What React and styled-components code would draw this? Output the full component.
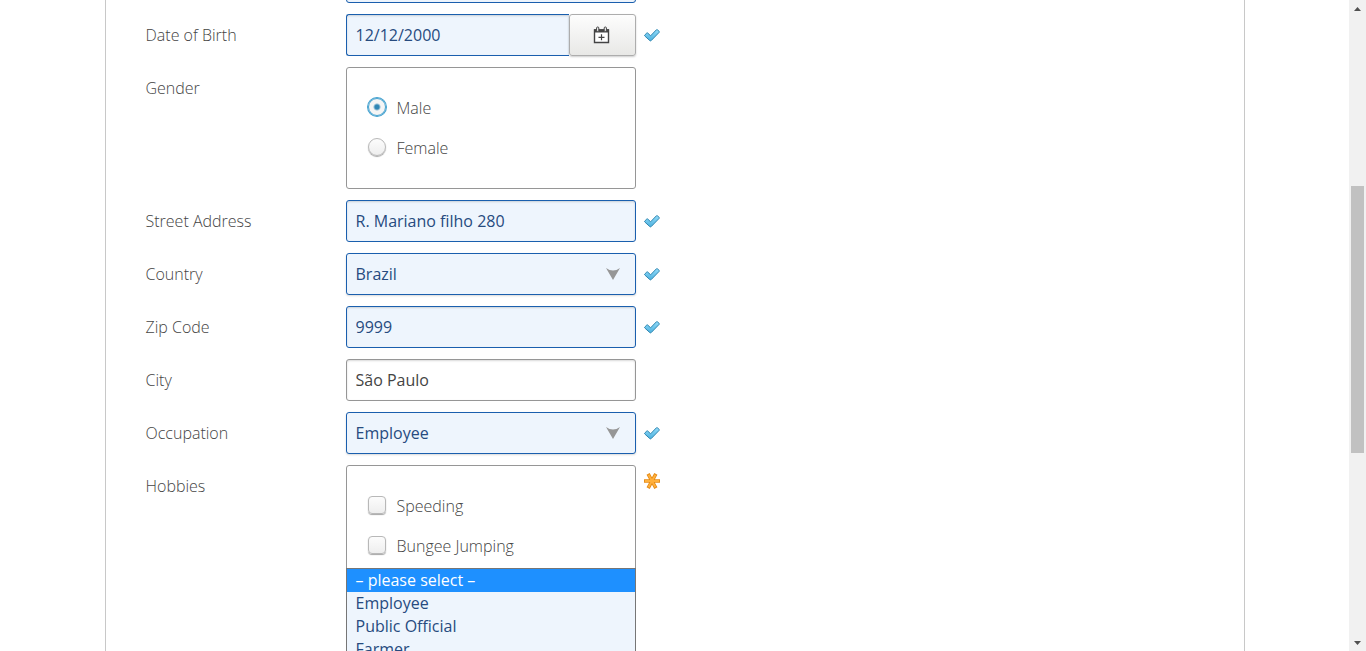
import React from "react";
import styled, { createGlobalStyle, css } from "styled-components";

const GlobalStyle = createGlobalStyle`
  *, *::before, *::after { box-sizing: border-box; }
  body {
    margin: 0;
    background: #fff;
    color: #444;
    font-family: "Open Sans", "Noto Sans", sans-serif;
    font-size: 16px;
    font-weight: 300;
    line-height: 22px;
  }
  input, select, button { font: inherit; margin: 0; }
`;

const Window = styled.div`
  display: flex;
  height: 100vh;
  overflow: hidden;
`;

const Viewport = styled.main`
  flex: 1;
  min-width: 0;
  overflow: hidden;
`;

const Panel = styled.div`
  display: flow-root;
  max-width: 1140px;
  min-height: 100vh;
  margin: 0 auto;
  padding: 0 40px;
  border: solid #c8c8c8;
  border-width: 0 1px;
`;

const Form = styled.form`
  display: flex;
  flex-direction: column;
  gap: 11px;
  margin-top: -39px;
`;

const Row = styled.div`
  display: grid;
  grid-template-columns: 200px minmax(0, 290px) 24px;
  align-items: start;

  > input { grid-column: 2; }
`;

const Caption = styled.label`
  padding-top: 10px;
`;

const Mark = styled.span`
  display: flex;
  padding: ${(p) => (p.$top ? "8px 0 0 8px" : "13px 0 0 8px")};
`;

const fieldLook = css`
  width: 100%;
  height: 42px;
  padding: 0 9px;
  border: 1px solid ${(p) => (p.$valid ? "#1a5fae" : "#969696")};
  border-radius: 3px;
  background: ${(p) => (p.$valid ? "#eef5fd" : "#fff")};
  color: ${(p) => (p.$valid ? "#274b7f" : "#444")};
  font-weight: 400;
  box-shadow: inset 0 1px 2px rgba(0, 0, 0, 0.15);
  outline: none;
`;

const TextField = styled.input`
  ${fieldLook}
`;

const SelectBox = styled.div`
  display: grid;
  align-items: center;

  > * { grid-area: 1 / 1; }
  > svg { justify-self: end; margin-right: 16px; pointer-events: none; }
`;

const SelectField = styled.select`
  ${fieldLook}
  appearance: none;
  box-shadow: 0 1px 2px rgba(0, 0, 0, 0.15);
`;

const DateGroup = styled.div`
  display: flex;

  input { flex: 1; min-width: 0; border-right: 0; border-radius: 3px 0 0 3px; }
`;

const DateButton = styled.button`
  display: flex;
  align-items: center;
  justify-content: center;
  width: 67px;
  height: 42px;
  padding: 0 2px 0 0;
  border: 1px solid #adadad;
  border-radius: 3px;
  background: linear-gradient(#fdfdfd, #e8e8e6);
  box-shadow: 0 1px 2px rgba(0, 0, 0, 0.2);
`;

const Group = styled.fieldset`
  position: relative;
  min-width: 0;
  margin: 0;
  padding: 20px;
  border: 1px solid #969696;
  border-radius: 3px;
`;

const Choice = styled.label`
  display: flex;
  align-items: center;
  gap: 10px;
  height: 40px;
`;

const choiceLook = css`
  appearance: none;
  flex: none;
  width: 18px;
  height: 18px;
  margin: 0 1px 2px;
  border: 1px solid #b8b8b8;
  background: linear-gradient(#fcfcfc, #eeeeee);
  box-shadow: 0 1px 1px rgba(0, 0, 0, 0.35);
`;

const Radio = styled.input.attrs({ type: "radio" })`
  ${choiceLook}
  border-radius: 50%;

  &:checked {
    border-color: #43a1cf;
    background: radial-gradient(circle, #2f86b5 0 2px, #f5f5f5 4px);
    box-shadow: 0 0 0 1px #43a1cf;
  }
`;

const Tick = styled.input.attrs({ type: "checkbox" })`
  ${choiceLook}
  border-radius: 4px;
`;

const Menu = styled.ul`
  position: absolute;
  top: 102px;
  left: -1px;
  right: -1px;
  margin: 0;
  padding: 0;
  border: 1px solid #767676;
  background: #eef5fd;
  color: #274b7f;
  font-weight: 400;
  list-style: none;
`;

const MenuItem = styled.li`
  height: 23px;
  padding: 0 9px;
  background: ${(p) => (p.$active ? "#1e90ff" : "transparent")};
  color: ${(p) => (p.$active ? "#fff" : "inherit")};
`;

const ScrollBar = styled.div`
  display: flex;
  flex-direction: column;
  align-items: center;
  width: 17px;
  background: #f1f1f1;
`;

const ScrollButton = styled.button`
  display: flex;
  align-items: center;
  justify-content: center;
  width: 17px;
  height: 17px;
  padding: 0;
  border: 0;
  background: none;
`;

const ScrollSpace = styled.div`
  flex: ${(p) => p.$share};
`;

const ScrollThumb = styled.div`
  flex: 267;
  width: 13px;
  background: #c1c1c1;
`;

const CheckIcon = () => (
  <svg width="16" height="16" viewBox="0 0 16 16" role="img" aria-label="Valid">
    <defs>
      <linearGradient id="tick" x1="0" y1="0" x2="0" y2="1">
        <stop offset="0" stopColor="#93dcfa" />
        <stop offset="1" stopColor="#4bb0de" />
      </linearGradient>
    </defs>
    <path
      d="M.7 8.1 2.8 6Q3.2 5.7 3.7 6L6.6 8.8 12.4 2.8Q12.9 2.3 13.4 2.8L15.2 4.4Q15.6 4.8 15.2 5.3L7.2 13.6Q6.5 14.2 5.8 13.6L.8 9Q.3 8.5.7 8.1Z"
      fill="url(#tick)"
      stroke="#2f86b0"
      strokeWidth="1"
      strokeLinejoin="round"
    />
  </svg>
);

const RequiredIcon = () => (
  <svg width="16" height="16" viewBox="0 0 16 16" role="img" aria-label="Required">
    <g fill="none" strokeLinecap="square">
      <path d="M1.8 8H14.2M5 2.5 11 13.5M11 2.5 5 13.5" stroke="#e58a16" strokeWidth="3.6" />
      <path d="M1.8 8H14.2M5 2.5 11 13.5M11 2.5 5 13.5" stroke="#ffb03c" strokeWidth="1.8" />
    </g>
  </svg>
);

const CalendarIcon = () => (
  <svg width="17" height="18" viewBox="0 0 17 18" aria-hidden="true">
    <path d="M1.5 4H15.5V16.5H1.5Z" fill="#fff" stroke="#444" strokeWidth="1.4" />
    <path d="M1 3.3H16V6.5H1Z" fill="#444" />
    <rect x="3.6" y="1" width="2.2" height="4.4" rx="1" fill="#f6f6f6" stroke="#444" />
    <rect x="11.2" y="1" width="2.2" height="4.4" rx="1" fill="#f6f6f6" stroke="#444" />
    <path d="M8.5 8.3V14.3M5.5 11.3H11.5" stroke="#444" strokeWidth="1.2" />
  </svg>
);

const ArrowIcon = () => (
  <svg width="14" height="12" viewBox="0 0 14 12" aria-hidden="true">
    <path d="M0 0Q7 5 14 0L7 12Z" fill="#969696" />
  </svg>
);

const ScrollArrow = ({ down }) => (
  <svg width="7" height="4" viewBox="0 0 7 4" aria-hidden="true">
    <path d={down ? "M0 0H7L3.5 4Z" : "M0 4H7L3.5 0Z"} fill="#505050" />
  </svg>
);

const Valid = () => (
  <Mark>
    <CheckIcon />
  </Mark>
);

function TextRow({ id, label, value, valid }) {
  return (
    <Row>
      <Caption htmlFor={id}>{label}</Caption>
      <TextField id={id} type="text" defaultValue={value} $valid={valid} />
      {valid && <Valid />}
    </Row>
  );
}

function SelectRow({ id, label, value }) {
  return (
    <Row>
      <Caption htmlFor={id}>{label}</Caption>
      <SelectBox>
        <SelectField id={id} defaultValue={value} $valid>
          <option>{value}</option>
        </SelectField>
        <ArrowIcon />
      </SelectBox>
      <Valid />
    </Row>
  );
}

const menuItems = ["– please select –", "Employee", "Public Official", "Farmer"];

export default function App() {
  return (
    <Window>
      <GlobalStyle />
      <Viewport>
        <Panel>
          <Form>
            <Row>
              <TextField type="text" aria-label="Name" $valid />
            </Row>
            <Row>
              <Caption htmlFor="birthdate">Date of Birth</Caption>
              <DateGroup>
                <TextField id="birthdate" type="text" defaultValue="12/12/2000" $valid />
                <DateButton type="button" aria-label="Open calendar">
                  <CalendarIcon />
                </DateButton>
              </DateGroup>
              <Valid />
            </Row>
            <Row>
              <Caption as="span" id="gender-caption">Gender</Caption>
              <Group aria-labelledby="gender-caption">
                <Choice>
                  <Radio name="gender" defaultChecked />
                  Male
                </Choice>
                <Choice>
                  <Radio name="gender" />
                  Female
                </Choice>
              </Group>
            </Row>
            <TextRow id="street" label="Street Address" value="R. Mariano filho 280" valid />
            <SelectRow id="country" label="Country" value="Brazil" />
            <TextRow id="zip" label="Zip Code" value="9999" valid />
            <TextRow id="city" label="City" value="São Paulo" />
            <SelectRow id="occupation" label="Occupation" value="Employee" />
            <Row>
              <Caption as="span" id="hobbies-caption">Hobbies</Caption>
              <Group aria-labelledby="hobbies-caption">
                <Choice>
                  <Tick name="speeding" />
                  Speeding
                </Choice>
                <Choice>
                  <Tick name="bungee" />
                  Bungee Jumping
                </Choice>
                <Menu role="listbox" aria-label="Occupation">
                  {menuItems.map((item, i) => (
                    <MenuItem key={item} role="option" aria-selected={i === 0} $active={i === 0}>
                      {item}
                    </MenuItem>
                  ))}
                </Menu>
              </Group>
              <Mark $top>
                <RequiredIcon />
              </Mark>
            </Row>
          </Form>
        </Panel>
      </Viewport>
      <ScrollBar>
        <ScrollButton type="button" aria-label="Scroll up">
          <ScrollArrow />
        </ScrollButton>
        <ScrollSpace $share={169} />
        <ScrollThumb />
        <ScrollSpace $share={181} />
        <ScrollButton type="button" aria-label="Scroll down">
          <ScrollArrow down />
        </ScrollButton>
      </ScrollBar>
    </Window>
  );
}
